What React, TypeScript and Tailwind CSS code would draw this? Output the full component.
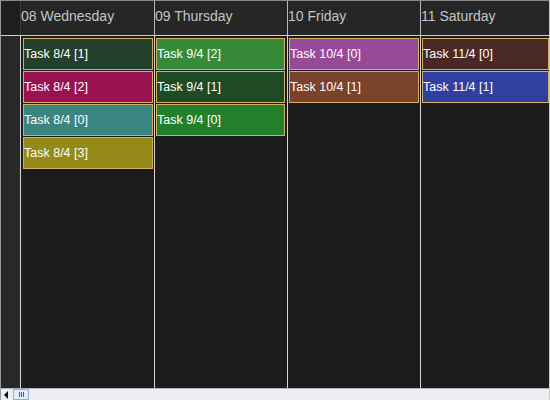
import React from "react";

type Ev = { label: string; bg: string };

const days: { title: string; w: string; pad: string; events: Ev[] }[] = [
  {
    title: "08 Wednesday",
    w: "w-[134px]",
    pad: "pl-[2px] pr-[1px]",
    events: [
      { label: "Task 8/4 [1]", bg: "bg-[#22402a]" },
      { label: "Task 8/4 [2]", bg: "bg-[#99114e]" },
      { label: "Task 8/4 [0]", bg: "bg-[#3a8580]" },
      { label: "Task 8/4 [3]", bg: "bg-[#958a18]" },
    ],
  },
  {
    title: "09 Thursday",
    w: "w-[133px]",
    pad: "pl-[1px] pr-[2px]",
    events: [
      { label: "Task 9/4 [2]", bg: "bg-[#378a38]" },
      { label: "Task 9/4 [1]", bg: "bg-[#1e4a24]" },
      { label: "Task 9/4 [0]", bg: "bg-[#22802a]" },
    ],
  },
  {
    title: "10 Friday",
    w: "w-[133px]",
    pad: "pl-[1px] pr-[1px]",
    events: [
      { label: "Task 10/4 [0]", bg: "bg-[#974a97]" },
      { label: "Task 10/4 [1]", bg: "bg-[#7a4228]" },
    ],
  },
  {
    title: "11 Saturday",
    w: "w-[129px]",
    pad: "pl-[1px] pr-0",
    events: [
      { label: "Task 11/4 [0]", bg: "bg-[#4a2824]" },
      { label: "Task 11/4 [1]", bg: "bg-[#3040a0]" },
    ],
  },
];

export default function App() {
  return (
    <div
      className="w-[550px] h-[400px] flex flex-col overflow-hidden bg-[#1c1c1c] border-t border-l border-r border-t-[#8a8a8a] border-l-[#9a9a9a] border-r-[#c8c8c8]"
      style={{ fontFamily: '"Liberation Sans", Arial, sans-serif' }}
    >
      {/* header */}
      <div className="flex h-[34px] bg-[#262626]">
        <div className="w-[19px] bg-[#1e1e1e]" />
        {days.map((d, i) => (
          <div
            key={i}
            className={`${d.w} border-l ${i === 0 ? "border-[#3a3a3a]" : "border-[#b8b8b8]"} flex items-start pt-[7px] text-[14px] leading-[16px] text-[#c4c4c4]`}
          >
            {d.title}
          </div>
        ))}
      </div>
      <div className="h-px bg-[#cfcfcf]" />
      {/* body */}
      <div className="flex flex-1">
        <div className="w-[19px] bg-[#282828]" />
        {days.map((d, i) => (
          <div
            key={i}
            className={`${d.w} ${d.pad} border-l border-[#d4d4d4] flex flex-col gap-[1px] pt-[2px]`}
          >
            {d.events.map((e, j) => (
              <div
                key={j}
                className={`${e.bg} h-[32px] border border-[#d2b06a] flex items-center text-[12.5px] text-white leading-none`}
              >
                {e.label}
              </div>
            ))}
          </div>
        ))}
      </div>
      {/* scrollbar */}
      <div className="h-[12px] bg-[#eeeeee] border-t border-[#a8b6ca] flex items-center">
        <div className="w-[10px] flex items-center justify-center">
          <div className="w-0 h-0 border-t-[4px] border-b-[4px] border-r-[4px] border-t-transparent border-b-transparent border-r-[#111]" />
        </div>
        <div className="ml-[2px] w-[16px] h-[11px] border border-[#8fb0d8] bg-[#e2ecf7] flex items-center justify-center gap-[1px]">
          <div className="w-px h-[5px] bg-[#4a5a70]" />
          <div className="w-px h-[5px] bg-[#4a5a70]" />
          <div className="w-px h-[5px] bg-[#4a5a70]" />
        </div>
      </div>
    </div>
  );
}
